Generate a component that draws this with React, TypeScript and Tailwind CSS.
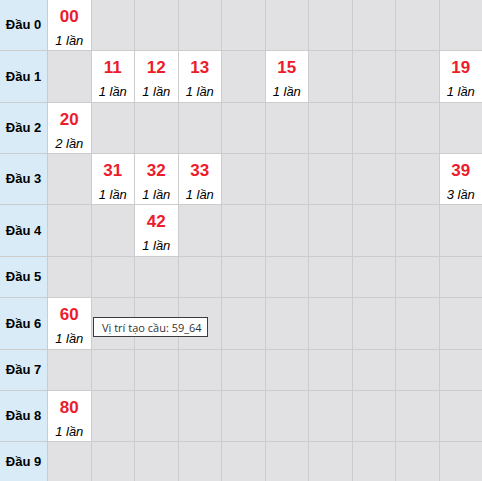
import React from "react";

type Hit = { so: string; lan: number };

// each row: the "đầu" digit, its height and the cells that have hits (by unit digit)
const rows: { dau: number; h: string; hits: Record<number, Hit> }[] = [
  { dau: 0, h: "h-[50px]", hits: { 0: { so: "00", lan: 1 } } },
  {
    dau: 1,
    h: "h-[51px]",
    hits: {
      1: { so: "11", lan: 1 },
      2: { so: "12", lan: 1 },
      3: { so: "13", lan: 1 },
      5: { so: "15", lan: 1 },
      9: { so: "19", lan: 1 },
    },
  },
  { dau: 2, h: "h-[50px]", hits: { 0: { so: "20", lan: 2 } } },
  {
    dau: 3,
    h: "h-[50px]",
    hits: {
      1: { so: "31", lan: 1 },
      2: { so: "32", lan: 1 },
      3: { so: "33", lan: 1 },
      9: { so: "39", lan: 3 },
    },
  },
  { dau: 4, h: "h-[51px]", hits: { 2: { so: "42", lan: 1 } } },
  { dau: 5, h: "h-[40px]", hits: {} },
  { dau: 6, h: "h-[51px]", hits: { 0: { so: "60", lan: 1 } } },
  { dau: 7, h: "h-[40px]", hits: {} },
  { dau: 8, h: "h-[50px]", hits: { 0: { so: "80", lan: 1 } } },
  { dau: 9, h: "h-[40px]", hits: {} },
];

const cols = [0, 1, 2, 3, 4, 5, 6, 7, 8, 9];

const App = () => {
  return (
    <div className="relative w-[482px] h-[481px] overflow-hidden bg-[#cccccc] font-['Liberation_Sans',Arial,sans-serif]">
      <div className="flex flex-col gap-px">
        {rows.map((row) => (
          <div
            key={row.dau}
            className={`grid grid-cols-[47px_repeat(10,1fr)] gap-px ${row.h}`}
          >
            <div className="flex items-center justify-center bg-[#d8ebf6] text-[13px] font-bold text-black">
              Đầu {row.dau}
            </div>
            {cols.map((c) => {
              const hit = row.hits[c];
              if (!hit) return <div key={c} className="bg-[#e1e1e3]" />;
              return (
                <div
                  key={c}
                  className="flex flex-col items-center overflow-hidden bg-white pt-[7px]"
                >
                  <span className="h-[20px] text-[17px] leading-[20px] font-bold text-[#ec1c2c]">
                    {hit.so}
                  </span>
                  <span className="mt-[5px] h-[18px] text-[13px] leading-[18px] italic text-black">
                    {hit.lan} lần
                  </span>
                </div>
              );
            })}
          </div>
        ))}
      </div>

      {/* tooltip hovering over 60 */}
      <div className="absolute left-[93px] top-[317px] flex h-[20px] items-center border border-[#3c3c3c] bg-white pl-[8px] pr-[5px] text-[11px] leading-none text-[#333] font-['Open_Sans',sans-serif]">
        Vị trí tạo cầu: 59_64
      </div>
    </div>
  );
};

export default App;
